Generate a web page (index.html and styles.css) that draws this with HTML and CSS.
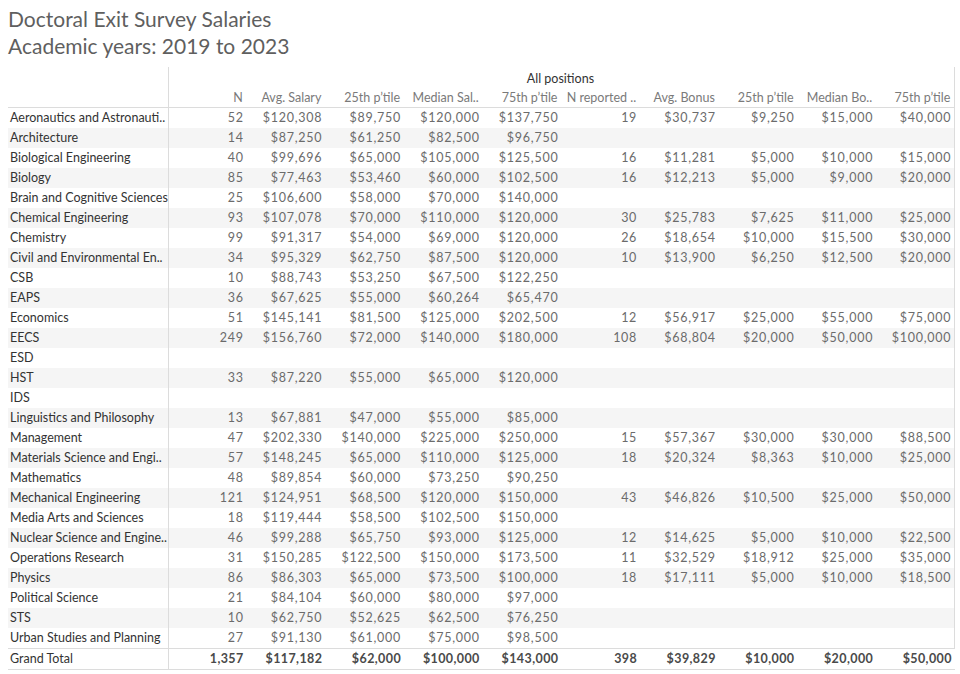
FILE: index.html
```html
<!DOCTYPE html>
<html>
<head>
<meta charset="utf-8">
<link rel="stylesheet" href="styles.css">
</head>
<body>
<div class="title">
  <div>Doctoral Exit Survey Salaries</div>
  <div>Academic years: 2019 to 2023</div>
</div>
<table class="sheet">
  <colgroup>
    <col class="c-label">
    <col><col><col><col><col><col><col><col><col><col>
  </colgroup>
  <thead>
    <tr class="h1">
      <th class="lab"></th>
      <th colspan="10" class="group">All positions</th>
    </tr>
    <tr class="h2">
      <th class="lab"></th>
      <th>N</th><th>Avg. Salary</th><th>25th p’tile</th><th>Median Sal..</th><th>75th p’tile</th>
      <th>N reported ..</th><th>Avg. Bonus</th><th>25th p’tile</th><th>Median Bo..</th><th>75th p’tile</th>
    </tr>
  </thead>
  <tbody>
    <tr><td class="lab">Aeronautics and Astronauti..</td><td>52</td><td>$120,308</td><td>$89,750</td><td>$120,000</td><td>$137,750</td><td>19</td><td>$30,737</td><td>$9,250</td><td>$15,000</td><td>$40,000</td></tr>
    <tr><td class="lab">Architecture</td><td>14</td><td>$87,250</td><td>$61,250</td><td>$82,500</td><td>$96,750</td><td></td><td></td><td></td><td></td><td></td></tr>
    <tr><td class="lab">Biological Engineering</td><td>40</td><td>$99,696</td><td>$65,000</td><td>$105,000</td><td>$125,500</td><td>16</td><td>$11,281</td><td>$5,000</td><td>$10,000</td><td>$15,000</td></tr>
    <tr><td class="lab">Biology</td><td>85</td><td>$77,463</td><td>$53,460</td><td>$60,000</td><td>$102,500</td><td>16</td><td>$12,213</td><td>$5,000</td><td>$9,000</td><td>$20,000</td></tr>
    <tr><td class="lab">Brain and Cognitive Sciences</td><td>25</td><td>$106,600</td><td>$58,000</td><td>$70,000</td><td>$140,000</td><td></td><td></td><td></td><td></td><td></td></tr>
    <tr><td class="lab">Chemical Engineering</td><td>93</td><td>$107,078</td><td>$70,000</td><td>$110,000</td><td>$120,000</td><td>30</td><td>$25,783</td><td>$7,625</td><td>$11,000</td><td>$25,000</td></tr>
    <tr><td class="lab">Chemistry</td><td>99</td><td>$91,317</td><td>$54,000</td><td>$69,000</td><td>$120,000</td><td>26</td><td>$18,654</td><td>$10,000</td><td>$15,500</td><td>$30,000</td></tr>
    <tr><td class="lab">Civil and Environmental En..</td><td>34</td><td>$95,329</td><td>$62,750</td><td>$87,500</td><td>$120,000</td><td>10</td><td>$13,900</td><td>$6,250</td><td>$12,500</td><td>$20,000</td></tr>
    <tr><td class="lab">CSB</td><td>10</td><td>$88,743</td><td>$53,250</td><td>$67,500</td><td>$122,250</td><td></td><td></td><td></td><td></td><td></td></tr>
    <tr><td class="lab">EAPS</td><td>36</td><td>$67,625</td><td>$55,000</td><td>$60,264</td><td>$65,470</td><td></td><td></td><td></td><td></td><td></td></tr>
    <tr><td class="lab">Economics</td><td>51</td><td>$145,141</td><td>$81,500</td><td>$125,000</td><td>$202,500</td><td>12</td><td>$56,917</td><td>$25,000</td><td>$55,000</td><td>$75,000</td></tr>
    <tr><td class="lab">EECS</td><td>249</td><td>$156,760</td><td>$72,000</td><td>$140,000</td><td>$180,000</td><td>108</td><td>$68,804</td><td>$20,000</td><td>$50,000</td><td>$100,000</td></tr>
    <tr><td class="lab">ESD</td><td></td><td></td><td></td><td></td><td></td><td></td><td></td><td></td><td></td><td></td></tr>
    <tr><td class="lab">HST</td><td>33</td><td>$87,220</td><td>$55,000</td><td>$65,000</td><td>$120,000</td><td></td><td></td><td></td><td></td><td></td></tr>
    <tr><td class="lab">IDS</td><td></td><td></td><td></td><td></td><td></td><td></td><td></td><td></td><td></td><td></td></tr>
    <tr><td class="lab">Linguistics and Philosophy</td><td>13</td><td>$67,881</td><td>$47,000</td><td>$55,000</td><td>$85,000</td><td></td><td></td><td></td><td></td><td></td></tr>
    <tr><td class="lab">Management</td><td>47</td><td>$202,330</td><td>$140,000</td><td>$225,000</td><td>$250,000</td><td>15</td><td>$57,367</td><td>$30,000</td><td>$30,000</td><td>$88,500</td></tr>
    <tr><td class="lab">Materials Science and Engi..</td><td>57</td><td>$148,245</td><td>$65,000</td><td>$110,000</td><td>$125,000</td><td>18</td><td>$20,324</td><td>$8,363</td><td>$10,000</td><td>$25,000</td></tr>
    <tr><td class="lab">Mathematics</td><td>48</td><td>$89,854</td><td>$60,000</td><td>$73,250</td><td>$90,250</td><td></td><td></td><td></td><td></td><td></td></tr>
    <tr><td class="lab">Mechanical Engineering</td><td>121</td><td>$124,951</td><td>$68,500</td><td>$120,000</td><td>$150,000</td><td>43</td><td>$46,826</td><td>$10,500</td><td>$25,000</td><td>$50,000</td></tr>
    <tr><td class="lab">Media Arts and Sciences</td><td>18</td><td>$119,444</td><td>$58,500</td><td>$102,500</td><td>$150,000</td><td></td><td></td><td></td><td></td><td></td></tr>
    <tr><td class="lab">Nuclear Science and Engine..</td><td>46</td><td>$99,288</td><td>$65,750</td><td>$93,000</td><td>$125,000</td><td>12</td><td>$14,625</td><td>$5,000</td><td>$10,000</td><td>$22,500</td></tr>
    <tr><td class="lab">Operations Research</td><td>31</td><td>$150,285</td><td>$122,500</td><td>$150,000</td><td>$173,500</td><td>11</td><td>$32,529</td><td>$18,912</td><td>$25,000</td><td>$35,000</td></tr>
    <tr><td class="lab">Physics</td><td>86</td><td>$86,303</td><td>$65,000</td><td>$73,500</td><td>$100,000</td><td>18</td><td>$17,111</td><td>$5,000</td><td>$10,000</td><td>$18,500</td></tr>
    <tr><td class="lab">Political Science</td><td>21</td><td>$84,104</td><td>$60,000</td><td>$80,000</td><td>$97,000</td><td></td><td></td><td></td><td></td><td></td></tr>
    <tr><td class="lab">STS</td><td>10</td><td>$62,750</td><td>$52,625</td><td>$62,500</td><td>$76,250</td><td></td><td></td><td></td><td></td><td></td></tr>
    <tr><td class="lab">Urban Studies and Planning</td><td>27</td><td>$91,130</td><td>$61,000</td><td>$75,000</td><td>$98,500</td><td></td><td></td><td></td><td></td><td></td></tr>
  </tbody>
  <tfoot>
    <tr><td class="lab">Grand Total</td><td>1,357</td><td>$117,182</td><td>$62,000</td><td>$100,000</td><td>$143,000</td><td>398</td><td>$39,829</td><td>$10,000</td><td>$20,000</td><td>$50,000</td></tr>
  </tfoot>
</table>
</body>
</html>
```

FILE: styles.css
```css
html, body {
  margin: 0;
  padding: 0;
  background: #ffffff;
}
body {
  padding: 5px 8px 0 8px;
  font-family: Lato, "Noto Sans", sans-serif;
}
.title {
  font-size: 21px;
  line-height: 27px;
  font-weight: 400;
  color: #5f5f5f;
  margin-bottom: 8px;
}
.sheet {
  border-collapse: collapse;
  table-layout: fixed;
  width: 947px;
  font-size: 12.5px;
}
.sheet col { width: 78.7px; }
.sheet col.c-label { width: 160px; }
.sheet th, .sheet td {
  height: 20px;
  padding: 0 3px 0 2px;
  text-align: right;
  white-space: nowrap;
  overflow: hidden;
  box-sizing: border-box;
  color: #6b6b6b;
  font-weight: 400;
  line-height: 20px;
}
.sheet td { letter-spacing: 0.75px; }
.sheet .lab {
  text-align: left;
  color: #333333;
  letter-spacing: 0;
  border-right: 1px solid #dcdcdc;
}
.sheet thead th { color: #7a7a7a; padding-right: 4px; }
.sheet tr.h1 th { padding-top: 4px; line-height: 16px; }
.sheet tr.h2 th { padding-top: 2px; line-height: 18px; }
.sheet thead th:last-child,
.sheet tbody td:last-child { border-right: 1px solid #dcdcdc; }
.sheet th.group {
  text-align: center;
  color: #333333;
}
.sheet tr.h2 th { border-bottom: 1px solid #dcdcdc; }
.sheet tbody tr:nth-child(even) td { background: #f5f5f5; }
.sheet tfoot td {
  border-top: 1px solid #dcdcdc;
  border-bottom: 1px solid #dcdcdc;
  color: #4a4a4a;
  font-weight: 700;
  letter-spacing: 0.4px;
}
.sheet tfoot td.lab { color: #333333; font-weight: 400; letter-spacing: 0; }
```
